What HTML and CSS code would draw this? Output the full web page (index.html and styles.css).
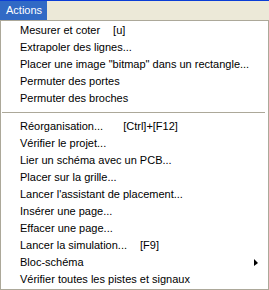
FILE: index.html
```html
<!DOCTYPE html>
<html>
<head>
	<title>Actions</title>
	<link rel="stylesheet" href="styles.css">
</head>
<body>
	<div class="menubar">
		<span class="menu-title">Actions</span>
	</div>
	<ul class="menu">
		<li>Mesurer et coter<span class="key key-u">[u]</span></li>
		<li>Extrapoler des lignes...</li>
		<li>Placer une image "bitmap" dans un rectangle...</li>
		<li>Permuter des portes</li>
		<li>Permuter des broches</li>
		<li class="sep"></li>
		<li>Réorganisation...<span class="key key-ctrl">[Ctrl]+[F12]</span></li>
		<li>Vérifier le projet...</li>
		<li>Lier un schéma avec un PCB...</li>
		<li>Placer sur la grille...</li>
		<li>Lancer l'assistant de placement...</li>
		<li>Insérer une page...</li>
		<li>Effacer une page...</li>
		<li>Lancer la simulation...<span class="key key-f9">[F9]</span></li>
		<li class="sub">Bloc-schéma<span class="arrow"></span></li>
		<li>Vérifier toutes les pistes et signaux</li>
	</ul>
</body>
</html>
```
FILE: styles.css
```css
body {
	margin: 0;
	font-family: Tahoma, "Liberation Sans", Arial, sans-serif;
	font-size: 11px;
	color: #000;
	background: #fff;
}
.menubar {
	height: 19px;
	background-color: #ECE9D8;
	border-top: 1px solid #0A3DD6;
	display: flex;
}
.menu-title {
	background-color: #316AC5;
	color: #fff;
	padding: 0 6px;
	line-height: 19px;
	width: 35px;
}
.menu {
	list-style: none;
	margin: 0;
	padding: 1px;
	box-sizing: border-box;
	border: 1px solid #ACA899;
	width: 269px;
	height: 270px;
}
.menu li {
	height: 17px;
	line-height: 17px;
	padding-left: 18px;
	white-space: nowrap;
	position: relative;
}
.menu li.sep {
	height: 11px;
	padding: 0;
	margin: 0 2px 0 0;
	display: flex;
	align-items: center;
}
.menu li.sep::before {
	content: "";
	display: block;
	width: 100%;
	border-top: 1px solid #ACA899;
}
.key {
	margin-left: 13px;
}
.key-ctrl {
	margin-left: 20px;
}
.key-f9 {
	margin-left: 13px;
}
.arrow {
	position: absolute;
	right: 9px;
	top: 5px;
	width: 0;
	height: 0;
	border-top: 4px solid transparent;
	border-bottom: 3px solid transparent;
	border-left: 4px solid #000;
}
```
